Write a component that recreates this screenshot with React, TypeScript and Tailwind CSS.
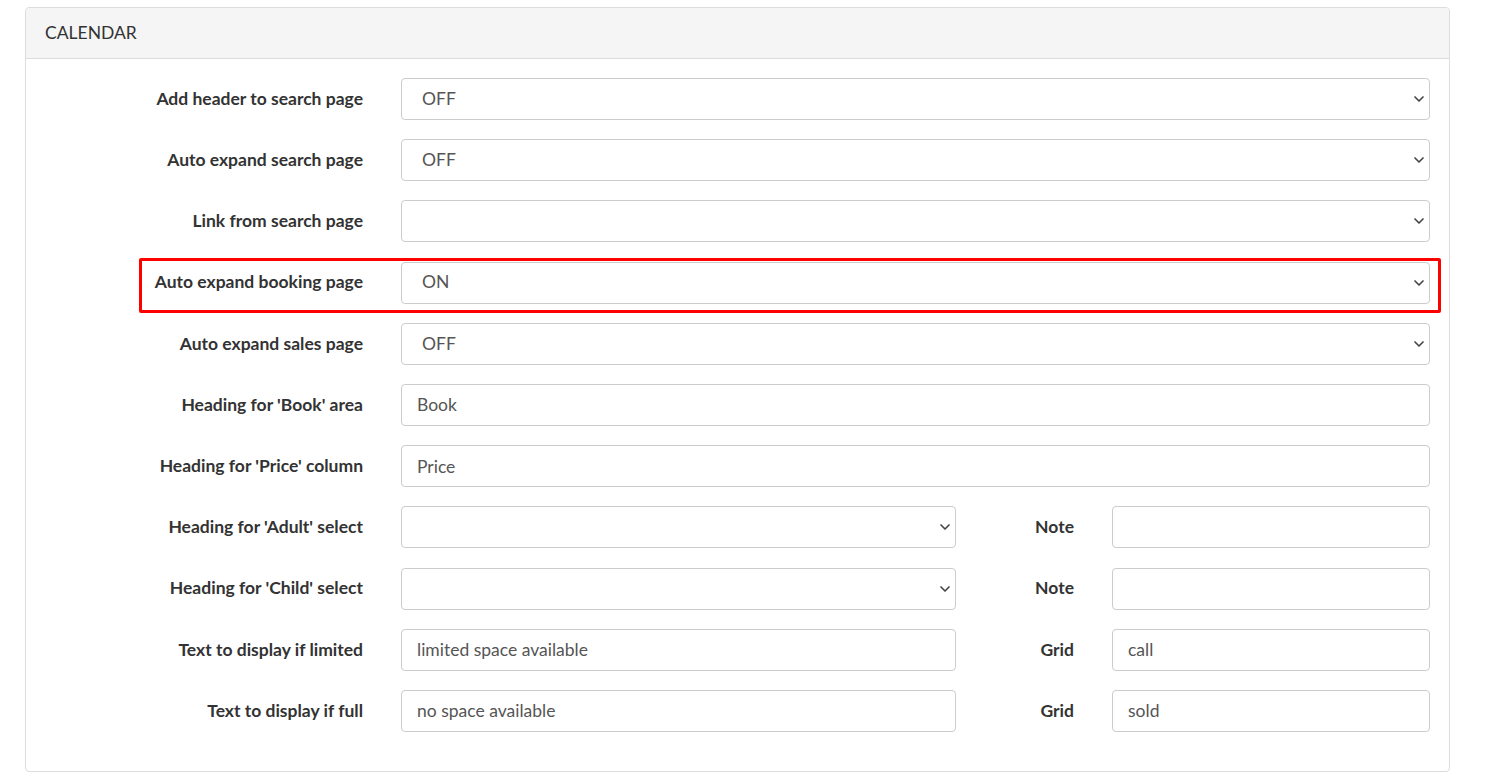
import { ChevronDown } from 'lucide-react';

type Full = { label: string; kind: 'select' | 'text'; value: string; highlight?: boolean };
type Half = { label: string; kind: 'select' | 'text'; value: string; side: string; sideValue: string };

const fullRows: Full[] = [
  { label: 'Add header to search page', kind: 'select', value: 'OFF' },
  { label: 'Auto expand search page', kind: 'select', value: 'OFF' },
  { label: 'Link from search page', kind: 'select', value: '' },
  { label: 'Auto expand booking page', kind: 'select', value: 'ON', highlight: true },
  { label: 'Auto expand sales page', kind: 'select', value: 'OFF' },
  { label: "Heading for 'Book' area", kind: 'text', value: 'Book' },
  { label: "Heading for 'Price' column", kind: 'text', value: 'Price' },
];

const halfRows: Half[] = [
  { label: "Heading for 'Adult' select", kind: 'select', value: '', side: 'Note', sideValue: '' },
  { label: "Heading for 'Child' select", kind: 'select', value: '', side: 'Note', sideValue: '' },
  { label: 'Text to display if limited', kind: 'text', value: 'limited space available', side: 'Grid', sideValue: 'call' },
  { label: 'Text to display if full', kind: 'text', value: 'no space available', side: 'Grid', sideValue: 'sold' },
];

function Field({ kind, value, className }: { kind: 'select' | 'text'; value: string; className: string }) {
  if (kind === 'select') {
    return (
      <div className={`relative h-[42px] ${className}`}>
        <div className="h-full w-full rounded-[4px] border border-[#cccccc] bg-white pl-[20px] flex items-center text-[17.5px] text-[#555555]">
          {value}
        </div>
        <ChevronDown size={16} strokeWidth={2.5} className="absolute right-[3px] top-[13px] text-[#444444]" />
      </div>
    );
  }
  return (
    <input
      readOnly
      value={value}
      className={`h-[42px] rounded-[4px] border border-[#cccccc] bg-white pl-[15px] text-[17.5px] text-[#555555] outline-none ${className}`}
    />
  );
}

export default function App() {
  return (
    <div className="min-h-screen bg-white pt-[7px] pl-[25px] pr-[55px]" style={{ fontFamily: 'Lato, "Open Sans", sans-serif' }}>
      <div className="w-[1425px] rounded-[4px] border border-[#dddddd] bg-white">
        <div className="h-[51px] bg-[#f5f5f5] border-b border-[#dddddd] rounded-t-[4px] flex items-center pl-[19px] text-[17.5px] text-[#333333]">
          CALENDAR
        </div>
        <div className="pt-[19px] pb-[39px] pr-[19px] flex flex-col gap-[19.2px]">
          {fullRows.map((r) => (
            <div key={r.label} className="relative flex items-center">
              {r.highlight && (
                <div className="absolute left-[113px] right-[-11px] top-[-4px] bottom-[-9px] border-[3px] border-[#ff0000] rounded-[2px]" />
              )}
              <div className="w-[337px] text-right text-[17.5px] font-bold text-[#333333]">{r.label}</div>
              <Field kind={r.kind} value={r.value} className="ml-[38px] flex-1" />
            </div>
          ))}
          {halfRows.map((r) => (
            <div key={r.label} className="flex items-center">
              <div className="w-[337px] text-right text-[17.5px] font-bold text-[#333333]">{r.label}</div>
              <Field kind={r.kind} value={r.value} className="ml-[38px] w-[555px]" />
              <div className="w-[118px] text-right text-[17.5px] font-bold text-[#333333]">{r.side}</div>
              <Field kind="text" value={r.sideValue} className="ml-[38px] flex-1" />
            </div>
          ))}
        </div>
      </div>
    </div>
  );
}
